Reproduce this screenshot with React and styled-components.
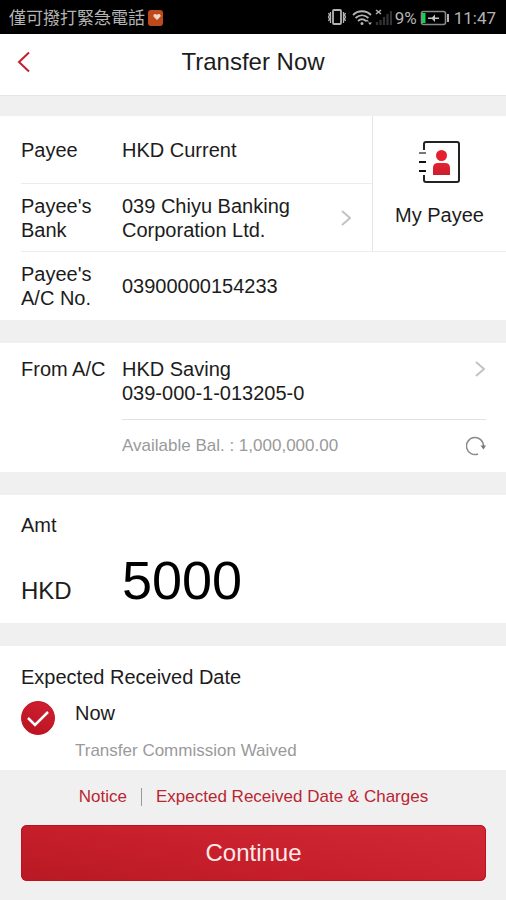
import React, { useState } from "react";
import styled, { createGlobalStyle } from "styled-components";

const GlobalStyle = createGlobalStyle`
  * { box-sizing: border-box; }
  body {
    margin: 0;
    background: #f0f0f0;
    color: #1c1c1c;
    font-family: "Liberation Sans", Arial, sans-serif;
    font-size: 20px;
    line-height: 24px;
  }
  button, input { font: inherit; color: inherit; }
  button { border: 0; padding: 0; background: none; cursor: pointer; text-align: left; }
  svg { display: block; flex: none; }
`;

const Page = styled.div`
  display: flex;
  flex-direction: column;
`;

const StatusBar = styled.div`
  display: flex;
  align-items: center;
  justify-content: space-between;
  min-height: 34px;
  padding: 2px 10px 0 9px;
  background: #000;
  color: #b4b4b4;
  font-family: Roboto, "Noto Sans CJK TC", sans-serif;
  font-size: 17px;
`;

const StatusGroup = styled.div`
  display: flex;
  align-items: center;
  gap: ${(p) => p.$gap}px;
`;

const Header = styled.header`
  display: grid;
  grid-template-columns: 48px 1fr 48px;
  align-items: center;
  min-height: 62px;
  padding-bottom: 6px;
  background: #fff;
  border-bottom: 1px solid #e4e4e4;
`;

const BackButton = styled.button`
  display: flex;
  padding: 8px 16px;
`;

const Title = styled.h1`
  margin: 0;
  font-size: 24px;
  line-height: 28px;
  font-weight: 400;
  text-align: center;
`;

const Main = styled.main`
  display: flex;
  flex-direction: column;
  gap: 23px;
  padding-top: 20px;
`;

const Card = styled.section`
  background: #fff;
`;

const PayeeTop = styled.div`
  display: grid;
  grid-template-columns: 1fr 134px;
`;

const Row = styled.div`
  display: grid;
  grid-template-columns: 101px 1fr;
  align-items: center;
  min-height: 68px;
  margin-left: 21px;
  border-bottom: ${(p) => (p.$last ? "0" : "1px solid #ececec")};
`;

const PickerButton = styled.button`
  display: flex;
  align-items: center;
  justify-content: space-between;
  gap: 16px;
  padding-right: ${(p) => p.$inset}px;
`;

const MyPayee = styled.button`
  display: flex;
  flex-direction: column;
  align-items: center;
  justify-content: center;
  gap: 20px;
  border-left: 1px solid #e6e6e6;
  border-bottom: 1px solid #ececec;
`;

const Account = styled(Card)`
  display: grid;
  grid-template-columns: 101px 1fr;
  padding: 14px 20px 0 21px;
`;

const AccountDetail = styled.div`
  display: flex;
  flex-direction: column;
`;

const AccountPicker = styled(PickerButton)`
  align-items: flex-start;
  padding-bottom: 14px;
  border-bottom: 1px solid #e2e2e2;
`;

const Balance = styled.div`
  display: flex;
  align-items: center;
  justify-content: space-between;
  min-height: 52px;
  color: #9a9a9a;
  font-size: 17px;
`;

const AmountCard = styled(Card)`
  padding: 18px 21px 12px;
`;

const AmountRow = styled.label`
  display: grid;
  grid-template-columns: 101px 1fr;
  align-items: baseline;
  padding-top: 12px;
`;

const Currency = styled.span`
  font-size: 24px;
`;

const AmountInput = styled.input`
  width: 100%;
  height: 62px;
  padding: 0;
  border: 0;
  outline: 0;
  background: transparent;
  color: #000;
  font-size: 54px;
`;

const DateCard = styled(Card)`
  padding: 19px 21px 7px;
`;

const Heading = styled.h2`
  margin: 0;
  font-size: 20px;
  font-weight: 400;
`;

const Option = styled.label`
  display: grid;
  grid-template-columns: 34px 1fr;
  align-items: start;
  gap: 20px;
  padding-top: 12px;
`;

const Radio = styled.input`
  appearance: none;
  width: 34px;
  height: 34px;
  margin: 0;
  border: 1px solid #bbb;
  border-radius: 50%;
  &:checked {
    border-color: #c41424;
    background: linear-gradient(25deg, #b9121f, #cf2232);
  }
`;

const RadioBox = styled.span`
  display: grid;
  & > * { grid-area: 1 / 1; }
  svg { pointer-events: none; }
`;

const OptionText = styled.span`
  display: flex;
  flex-direction: column;
  gap: 14px;
`;

const Muted = styled.span`
  color: #9a9a9a;
  font-size: 17px;
`;

const Footer = styled.footer`
  display: flex;
  flex-direction: column;
  gap: 16px;
  padding: 15px 20px 20px 21px;
`;

const Links = styled.nav`
  display: flex;
  align-items: center;
  justify-content: center;
`;

const FootLink = styled.a`
  color: #b92632;
  font-size: 17px;
  text-decoration: none;
  &:first-child {
    padding-right: 14px;
  }
  &:last-child {
    padding-left: 14px;
  }
`;

const Separator = styled.span`
  width: 1px;
  height: 18px;
  background: #999;
`;

const Continue = styled.button`
  min-height: 56px;
  border-radius: 6px;
  background: linear-gradient(10deg, #b81924, #c8202c 50%, #d12a36);
  box-shadow: inset 0 0 0 1px #c01020;
  color: #ffe9e9;
  font-size: 24px;
  text-align: center;
`;

function Chevron() {
  return (
    <svg width="10" height="18" viewBox="0 0 10 18" fill="none" stroke="#c3c3c3" strokeWidth="2" aria-hidden="true">
      <path d="M1 2l8 7-8 7" />
    </svg>
  );
}

function StatusIcons() {
  return (
    <svg width="66" height="20" viewBox="0 0 66 20" fill="none" stroke="#b4b4b4" aria-hidden="true">
      <rect x="7" y="2" width="8" height="14" rx="1" strokeWidth="1.8" />
      <path d="M4.500 4v11M2.500 5l1 2-1 2 1 2-1 2M17.500 4v11M19.500 5l-1 2 1 2-1 2 1 2" strokeWidth="1.3" />
      <path d="M27 7c5-5 13-5 18 0M29.500 10c4-3.600 9-3.600 13 0M32 13c2.500-2.200 5.500-2.200 8 0" strokeWidth="1.8" />
      <circle cx="36" cy="15.500" r="1.500" fill="#b4b4b4" stroke="none" />
      <path d="M39 13.500l2-2 2 2zM42 14.500h4l-2 2.500z" fill="#b4b4b4" stroke="none" />
      <path d="M50 2l5 4M55 2l-5 4" strokeWidth="1.500" />
      <path d="M51 17v-3M54.500 17v-5M58 17V9M61.500 17V6M65 17V3" stroke="#333" strokeWidth="2.200" />
    </svg>
  );
}

function Battery() {
  return (
    <svg width="30" height="16" viewBox="0 0 30 16" fill="none" aria-hidden="true">
      <rect x="1.500" y="1.500" width="24" height="13" rx="2" stroke="#888" strokeWidth="1.600" />
      <rect x="2" y="3" width="3.500" height="10" fill="#16d052" />
      <path d="M28 4v8" stroke="#b4b4b4" strokeWidth="2" />
      <path d="M8 7.500h4l3-3v3h4v1.500h-4v3l-3-3H8z" fill="#c4c4c4" />
    </svg>
  );
}

function PayeeBook() {
  return (
    <svg width="42" height="42" viewBox="0 0 42 42" fill="none" aria-hidden="true">
      <defs>
        <linearGradient id="person" x1="0" y1="0" x2="0" y2="1">
          <stop offset="0" stopColor="#e9202e" />
          <stop offset="1" stopColor="#c6202d" />
        </linearGradient>
      </defs>
      <path d="M5 9V3q0-2 2-2h31q2 0 2 2v36q0 2-2 2H7q-2 0-2-2v-5" stroke="#222" strokeWidth="2" />
      <path d="M0 12h7" stroke="#777" strokeWidth="2" />
      <path d="M0 21h7M0 30h7" stroke="#111" strokeWidth="2" />
      <circle cx="22.500" cy="14.500" r="5.500" fill="#e4202e" />
      <path d="M14 34v-7q0-5 5-5h7q5 0 5 5v7z" fill="url(#person)" />
    </svg>
  );
}

export default function App() {
  const [amount, setAmount] = useState("5000");
  return (
    <Page>
      <GlobalStyle />
      <StatusBar>
        <StatusGroup $gap={2}>
          <span>僅可撥打緊急電話</span>
          <svg width="17" height="17" viewBox="0 0 17 17" aria-hidden="true">
            <rect x="1" width="15" height="16" rx="3" fill="#bd4a1b" />
            <path d="M10 10L6.500 6.500q-.500-2.500 1.500-2.500 1.500 0 2 1 .5-1 2-1 2 0 1.500 2.500z" fill="#f2d6ca" />
          </svg>
        </StatusGroup>
        <StatusGroup $gap={3}>
          <StatusIcons />
          <span>9%</span>
          <StatusGroup $gap={4}>
            <Battery />
            <span>11:47</span>
          </StatusGroup>
        </StatusGroup>
      </StatusBar>
      <Header>
        <BackButton type="button" aria-label="Back">
          <svg width="15" height="22" viewBox="0 0 15 22" fill="none" stroke="#c0212c" strokeWidth="2" aria-hidden="true">
            <path d="M13 1.500L3 11l10 9.500" />
          </svg>
        </BackButton>
        <Title>Transfer Now</Title>
      </Header>
      <Main>
        <Card>
          <PayeeTop>
            <div>
              <Row>
                <span>Payee</span>
                <span>HKD Current</span>
              </Row>
              <Row>
                <span id="bank-label">Payee's Bank</span>
                <PickerButton type="button" $inset={21} aria-describedby="bank-label">
                  <span>039 Chiyu Banking Corporation Ltd.</span>
                  <Chevron />
                </PickerButton>
              </Row>
            </div>
            <MyPayee type="button">
              <PayeeBook />
              <span>My Payee</span>
            </MyPayee>
          </PayeeTop>
          <Row $last>
            <span>Payee's A/C No.</span>
            <span>03900000154233</span>
          </Row>
        </Card>
        <Account>
          <span id="from-label">From A/C</span>
          <AccountDetail>
            <AccountPicker type="button" $inset={0} aria-describedby="from-label">
              <span>
                HKD Saving
                <br />
                039-000-1-013205-0
              </span>
              <svg width="11" height="24" viewBox="0 0 11 24" fill="none" stroke="#c3c3c3" strokeWidth="2" aria-hidden="true">
                <path d="M1 5l8 7-8 7" />
              </svg>
            </AccountPicker>
            <Balance>
              <span>Available Bal. : 1,000,000.00</span>
              <button type="button" aria-label="Refresh balance">
                <svg width="20" height="20" viewBox="0 0 20 20" fill="none" aria-hidden="true">
                  <path d="M12 18A8.500 8.500 0 1 1 17.500 10" stroke="#8a8a8a" strokeWidth="1.500" />
                  <path d="M14.500 9.500H20l-2.500 4z" fill="#777" />
                </svg>
              </button>
            </Balance>
          </AccountDetail>
        </Account>
        <AmountCard>
          <Heading>Amt</Heading>
          <AmountRow>
            <Currency>HKD</Currency>
            <AmountInput inputMode="decimal" value={amount} onChange={(e) => setAmount(e.target.value)} />
          </AmountRow>
        </AmountCard>
        <DateCard>
          <Heading>Expected Received Date</Heading>
          <Option>
            <RadioBox>
              <Radio type="radio" name="date" defaultChecked />
              <svg width="34" height="34" viewBox="0 0 34 34" fill="none" stroke="#fff" strokeWidth="2.500" aria-hidden="true">
                <path d="M7 17l7 7 13-13" />
              </svg>
            </RadioBox>
            <OptionText>
              <span>Now</span>
              <Muted>Transfer Commission Waived</Muted>
            </OptionText>
          </Option>
        </DateCard>
      </Main>
      <Footer>
        <Links>
          <FootLink href="#notice">Notice</FootLink>
          <Separator />
          <FootLink href="#charges">Expected Received Date &amp; Charges</FootLink>
        </Links>
        <Continue type="button">Continue</Continue>
      </Footer>
    </Page>
  );
}
